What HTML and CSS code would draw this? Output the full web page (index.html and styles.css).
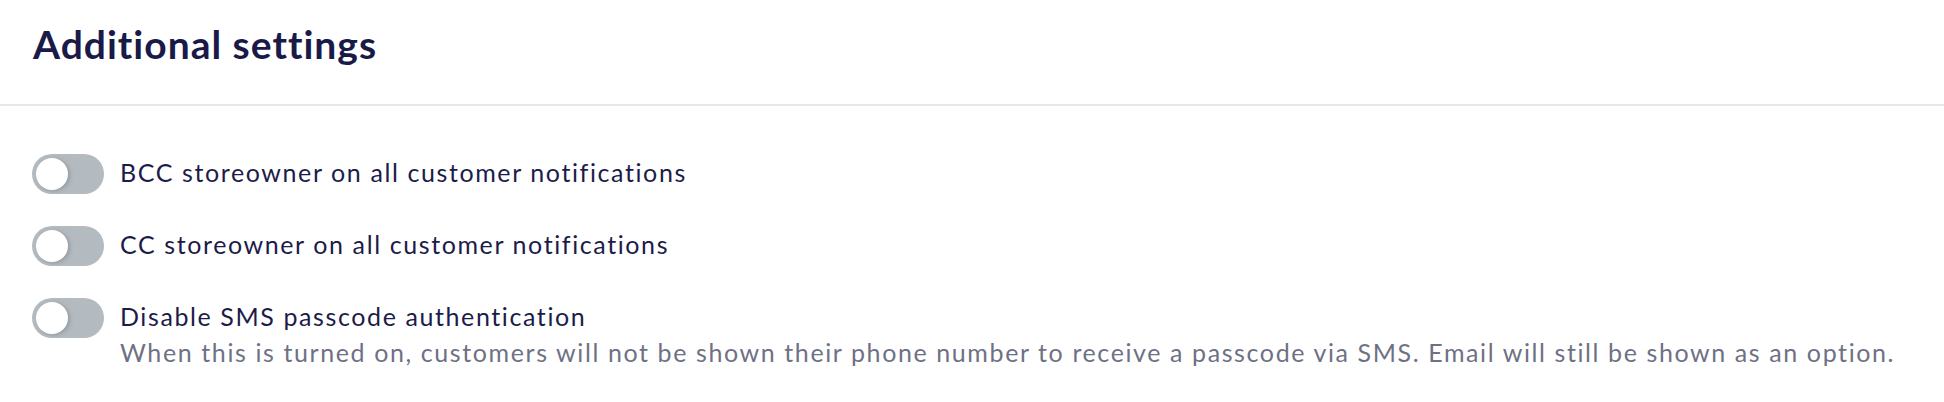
FILE: index.html
```html
<!DOCTYPE html>
<html lang="en">
<head>
    <meta charset="UTF-8">
    <meta name="viewport" content="width=device-width, initial-scale=1.0">
    <title>Additional settings</title>
    <link rel="stylesheet" href="styles.css">
</head>
<body>
    <div class="panel">
        <!-- Panel header -->
        <div class="panel-header">
            <h2>Additional settings</h2>
        </div>

        <!-- Toggle list -->
        <div class="panel-body">
            <label class="setting">
                <span class="toggle"><span class="knob"></span></span>
                <span class="setting-text">
                    <span class="setting-title">BCC storeowner on all customer notifications</span>
                </span>
            </label>
            <label class="setting">
                <span class="toggle"><span class="knob"></span></span>
                <span class="setting-text">
                    <span class="setting-title">CC storeowner on all customer notifications</span>
                </span>
            </label>
            <label class="setting">
                <span class="toggle"><span class="knob"></span></span>
                <span class="setting-text">
                    <span class="setting-title">Disable SMS passcode authentication</span>
                    <span class="setting-help">When this is turned on, customers will not be shown their phone number to receive a passcode via SMS. Email will still be shown as an option.</span>
                </span>
            </label>
        </div>
    </div>
</body>
</html>
```

FILE: styles.css
```css
body {
    margin: 0;
    background-color: #fff;
    font-family: 'Lato', sans-serif;
    color: #1c1c4a;
}
.panel-header {
    padding: 20px 33px 36px;
    border-bottom: 2px solid #e8e8e8;
}
.panel-header h2 {
    margin: 0;
    font-size: 39px;
    line-height: 48px;
    font-weight: 700;
    letter-spacing: 1px;
    color: #1a1a48;
}
.panel-body {
    display: flex;
    flex-direction: column;
    gap: 32px;
    padding: 48px 32px;
}
.setting {
    display: flex;
    align-items: flex-start;
    gap: 16px;
    cursor: pointer;
}
.toggle {
    display: flex;
    align-items: center;
    flex-shrink: 0;
    width: 72px;
    height: 40px;
    padding: 0 4px;
    box-sizing: border-box;
    border-radius: 20px;
    background-color: #b3bbc1;
}
.knob {
    width: 32px;
    height: 32px;
    border-radius: 50%;
    background-color: #fff;
    box-shadow: 2px 1px 4px rgba(0, 0, 0, 0.18);
}
.setting-text {
    display: flex;
    flex-direction: column;
    font-size: 25px;
    line-height: 36px;
    letter-spacing: 1.6px;
}
.setting-help {
    color: #6e7184;
}
```
